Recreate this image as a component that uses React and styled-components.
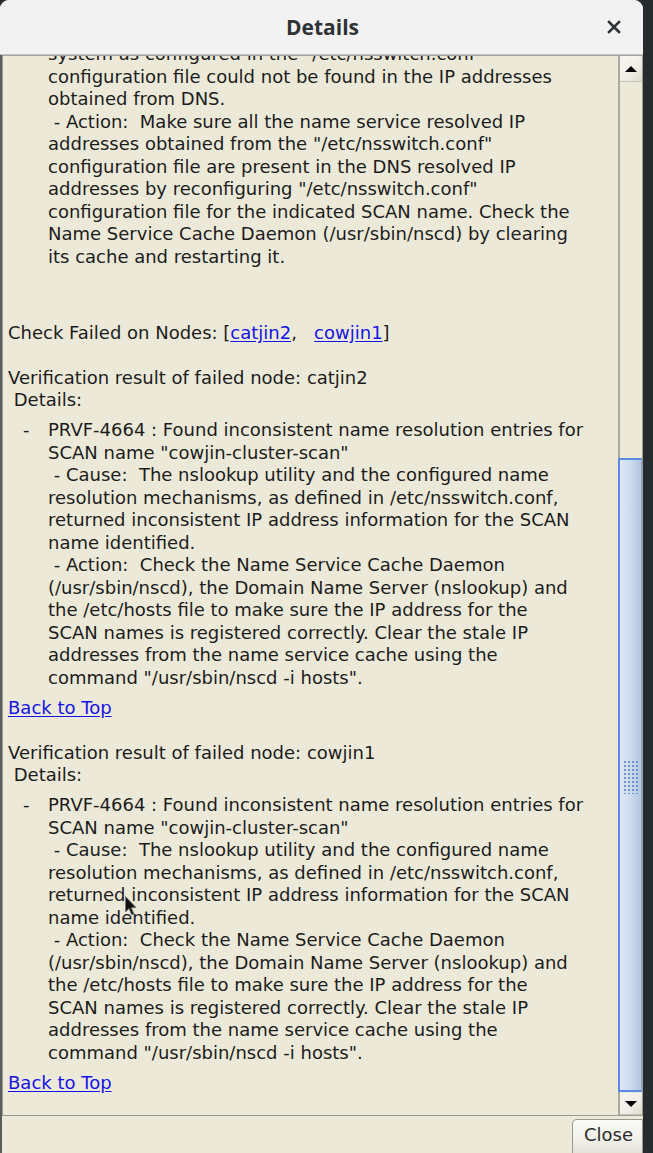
import styled, { createGlobalStyle } from "styled-components"

const GlobalStyle = createGlobalStyle`
  html, body {
    margin: 0;
    padding: 0;
    background: #262b2e;
    overflow: hidden;
  }
`

const topBlock = [
  'system as configured in the "/etc/nsswitch.conf"',
  'configuration file could not be found in the IP addresses',
  'obtained from DNS.',
  ' - Action:  Make sure all the name service resolved IP',
  'addresses obtained from the "/etc/nsswitch.conf"',
  'configuration file are present in the DNS resolved IP',
  'addresses by reconfiguring "/etc/nsswitch.conf"',
  'configuration file for the indicated SCAN name. Check the',
  'Name Service Cache Daemon (/usr/sbin/nscd) by clearing',
  'its cache and restarting it.',
]

const issueLines = [
  'PRVF-4664 : Found inconsistent name resolution entries for',
  'SCAN name "cowjin-cluster-scan"',
  ' - Cause:  The nslookup utility and the configured name',
  'resolution mechanisms, as defined in /etc/nsswitch.conf,',
  'returned inconsistent IP address information for the SCAN',
  'name identified.',
  ' - Action:  Check the Name Service Cache Daemon',
  '(/usr/sbin/nscd), the Domain Name Server (nslookup) and',
  'the /etc/hosts file to make sure the IP address for the',
  'SCAN names is registered correctly. Clear the stale IP',
  'addresses from the name service cache using the',
  'command "/usr/sbin/nscd -i hosts".',
]

const nodes = ["catjin2", "cowjin1"]

function NodeResult({ node }) {
  return (
    <Section>
      <Line>Verification result of failed node: {node}</Line>
      <Line> Details:</Line>
      <Item>
        <Dash>-</Dash>
        <ItemText>
          {issueLines.map((l, i) => <Line key={i}>{l}</Line>)}
        </ItemText>
      </Item>
      <Line><Link>Back to Top</Link></Line>
    </Section>
  )
}

function Cursor() {
  return (
    <CursorWrap>
      <svg width="14" height="22" viewBox="0 0 14 22">
        <path d="M1.5 1.5 L1.5 17 L5 13.5 L7.8 20 L10 19 L7.3 12.8 L12 12.5 Z" fill="#111" stroke="#777" strokeWidth="1" strokeLinejoin="round" />
      </svg>
    </CursorWrap>
  )
}

export default function App() {
  return (
    <Page>
      <GlobalStyle />
      <Dialog>
        <TitleBar>
          <Title>Details</Title>
          <CloseX>
            <svg width="14" height="14" viewBox="0 0 14 14">
              <path d="M2 2 L12 12 M12 2 L2 12" stroke="#2e3436" strokeWidth="2.6" strokeLinecap="square" />
            </svg>
          </CloseX>
        </TitleBar>
        <Body>
          <Panel>
            <Viewport>
              <Content>
                <TopBlock>
                  {topBlock.map((l, i) => <Line key={i}>{l}</Line>)}
                </TopBlock>
                <Line>
                  Check Failed on Nodes: [<Link>catjin2</Link>,   <Link>cowjin1</Link>]
                </Line>
                {nodes.map(n => <NodeResult key={n} node={n} />)}
              </Content>
              <Cursor />
            </Viewport>
            <Scrollbar>
              <ArrowButton $h={26}><Arrow /></ArrowButton>
              <Track>
                <Thumb>
                  <Grip />
                </Thumb>
              </Track>
              <ArrowButton $h={22}><Arrow $down /></ArrowButton>
            </Scrollbar>
          </Panel>
          <Footer>
            <CloseButton>Close</CloseButton>
          </Footer>
        </Body>
      </Dialog>
    </Page>
  )
}

const Page = styled.div`
  width: 653px;
  height: 1153px;
  display: flex;
  background: #262b2e;
`

const Dialog = styled.div`
  width: 643px;
  height: 1153px;
  display: flex;
  flex-direction: column;
  border-radius: 9px 9px 0 0;
  overflow: hidden;
  background: #ece9d8;
`

const TitleBar = styled.div`
  height: 55px;
  flex-shrink: 0;
  display: flex;
  align-items: center;
  justify-content: center;
  position: relative;
  background: #f2f2f2;
  border-bottom: 1px solid #c2c2bf;
  box-sizing: border-box;
`

const Title = styled.div`
  font-family: "Open Sans", "DejaVu Sans", sans-serif;
  font-weight: 700;
  font-size: 21px;
  color: #2e3436;
  margin-left: 2px;
`

const CloseX = styled.div`
  position: absolute;
  right: 22px;
  top: 20px;
  width: 14px;
  height: 14px;
  display: flex;
`

const Body = styled.div`
  flex: 1;
  display: flex;
  flex-direction: column;
  border-left: 2px solid #5b5d5c;
  min-height: 0;
`

const Panel = styled.div`
  height: 1067px;
  display: flex;
  border: 1px solid #9c9b95;
  border-top-color: #a8a7a0;
  box-sizing: border-box;
  background: #ece9d8;
`

const Viewport = styled.div`
  flex: 1;
  overflow: hidden;
  position: relative;
  padding-left: 5px;
`

const Content = styled.div`
  margin-top: -13px;
  font-family: "DejaVu Sans", sans-serif;
  font-size: 18px;
  line-height: 22.5px;
  color: #1c1c1c;
`

const Line = styled.div`
  white-space: pre;
`

const TopBlock = styled.div`
  padding-left: 40px;
  margin-bottom: 53.5px;
`

const Section = styled.div`
  margin-top: 22.5px;
`

const Item = styled.div`
  display: flex;
  margin: 7.5px 0;
`

const Dash = styled.div`
  width: 40px;
  padding-left: 15px;
  box-sizing: border-box;
  flex-shrink: 0;
`

const ItemText = styled.div`
  display: flex;
  flex-direction: column;
`

const Link = styled.span`
  color: #1414e8;
  text-decoration: underline;
  text-underline-offset: 2px;
`

const CursorWrap = styled.div`
  position: absolute;
  left: 121px;
  top: 839px;
  width: 14px;
  height: 22px;
`

const Scrollbar = styled.div`
  width: 24px;
  display: flex;
  flex-direction: column;
  border-left: 2px solid #a9a8a1;
  box-sizing: border-box;
  background: #ece9d8;
`

const ArrowButton = styled.div`
  height: ${p => p.$h}px;
  flex-shrink: 0;
  display: flex;
  align-items: center;
  justify-content: center;
  background: linear-gradient(135deg, #f8f7f2 0%, #efede4 60%, #dedbcd 100%);
  border-bottom: 1px solid #c4c2b8;
  box-sizing: border-box;
`

const Arrow = styled.div`
  width: 0;
  height: 0;
  border-left: 6px solid transparent;
  border-right: 6px solid transparent;
  ${p => p.$down ? "border-top: 6px solid #000;" : "border-bottom: 6px solid #000;"}
`

const Track = styled.div`
  flex: 1;
  display: flex;
  flex-direction: column;
  justify-content: flex-end;
  background: #ece9d8;
`

const Thumb = styled.div`
  height: 634px;
  margin-left: -2px;
  margin-bottom: 1px;
  border: 2px solid #5a8be2;
  border-right: 1px solid #8fa6cc;
  box-sizing: border-box;
  background: linear-gradient(90deg, #dfe8f5 0%, #cddbee 50%, #b3c5e2 100%);
  display: flex;
  justify-content: center;
  padding-top: 300px;
`

const Grip = styled.div`
  width: 15px;
  height: 34px;
  background-image: radial-gradient(circle, #6b93d6 1.1px, transparent 1.4px);
  background-size: 4px 4px;
`

const Footer = styled.div`
  flex: 1;
  display: flex;
  justify-content: flex-end;
  align-items: flex-start;
  padding-top: 3px;
`

const CloseButton = styled.div`
  width: 71px;
  height: 34px;
  box-sizing: border-box;
  border: 1px solid #9a9990;
  border-bottom: none;
  border-radius: 5px 0 0 0;
  background: linear-gradient(180deg, #fbfbf8 0%, #f1f0ea 60%, #e4e2d7 100%);
  font-family: "DejaVu Sans", sans-serif;
  font-size: 18px;
  color: #2a2a2a;
  padding: 4px 0 0 11px;
`
